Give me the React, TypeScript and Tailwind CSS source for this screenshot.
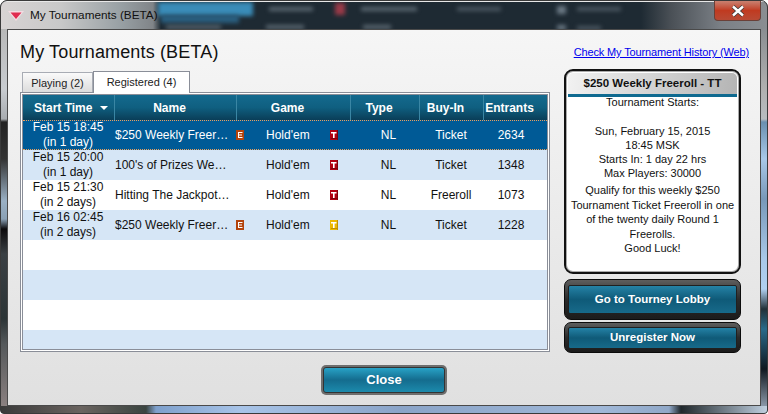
import React from "react";

const cols = ["w-[91px]", "w-[122px]", "w-[114px]", "w-[69px]", "w-[64px]", "w-[64px]"];
const headCols = ["w-[92px]", "w-[122px]", "w-[114px]", "w-[69px]", "w-[64px]", "w-[63px]"];
const headers = ["Start Time", "Name", "Game", "Type", "Buy-In", "Entrants"];
const rows = [
  { d: "Feb 15 18:45", r: "(in 1 day)", n: "$250 Weekly Freer…", e: true, t: "#b00010", s: "#7c0008", b: "Ticket", c: "2634" },
  { d: "Feb 15 20:00", r: "(in 1 day)", n: "100's of Prizes We…", e: false, t: "#b00010", s: "#7c0008", b: "Ticket", c: "1348" },
  { d: "Feb 15 21:30", r: "(in 2 days)", n: "Hitting The Jackpot…", e: false, t: "#b00010", s: "#7c0008", b: "Freeroll", c: "1073" },
  { d: "Feb 16 02:45", r: "(in 2 days)", n: "$250 Weekly Freer…", e: true, t: "#ecb800", s: "#c09000", b: "Ticket", c: "1228" },
];

const blurs = [
  { c: "left-[157px] top-[0px] w-[95px] h-[14px] bg-[#3a8cb8]" },
  { c: "left-[160px] top-[13px] w-[78px] h-[8px] bg-[#2a5f80]" },
  { c: "left-[165px] top-[23px] w-[55px] h-[4px] bg-[#56646e]" },
  { c: "left-[268px] top-[5px] w-[44px] h-[4px] bg-[#5c6872]" },
  { c: "left-[265px] top-[23px] w-[38px] h-[4px] bg-[#5c6872]" },
  { c: "left-[334px] top-[1px] w-[10px] h-[12px] bg-[#9a3a48]" },
  { c: "left-[360px] top-[5px] w-[56px] h-[4px] bg-[#5c6872]" },
  { c: "left-[362px] top-[23px] w-[28px] h-[4px] bg-[#5c6872]" },
  { c: "left-[456px] top-[5px] w-[44px] h-[4px] bg-[#4c5862]" },
  { c: "left-[556px] top-[4px] w-[9px] h-[8px] bg-[#6a7884]" },
  { c: "left-[576px] top-[5px] w-[44px] h-[4px] bg-[#4c5862]" },
  { c: "left-[556px] top-[23px] w-[9px] h-[5px] bg-[#6a7884]" },
  { c: "left-[576px] top-[24px] w-[24px] h-[4px] bg-[#4c5862]" },
];

function TIcon({ color, shade }: { color: string; shade: string }) {
  return (
    <svg width="8" height="10" viewBox="0 0 8 10" className="shrink-0">
      <rect width="8" height="10" fill={color} />
      <path d="M7 9H1V8h6zM8 0H7v10h1z" fill={shade} />
      <path d="M1 2h5.5v1.6H4.6V8H3V3.6H1z" fill="#fff" />
    </svg>
  );
}

function EIcon() {
  return (
    <svg width="8" height="10" viewBox="0 0 8 10" className="shrink-0">
      <rect width="8" height="10" fill="#b3430c" />
      <path d="M2 2h4.5v1H3v1.5h3v1H3V7h3.5v1H2z" fill="#fff" />
    </svg>
  );
}

function DarkButton({ label, outer, inner }: { label: string; outer: string; inner: string }) {
  return (
    <div className={`${outer} rounded-[7px] border border-[#0c0c0c] bg-gradient-to-b from-[#5e5e5e] via-[#2a2a2a] to-[#1c1c1c] px-[3px] flex flex-col justify-center`}>
      <div className={`${inner} rounded-[2px] border border-[#202020] bg-gradient-to-b from-[#2482a6] via-[#0f5a78] to-[#176a8a] flex items-center justify-center text-white text-[11.5px] font-bold`}>
        {label}
      </div>
    </div>
  );
}

export default function App() {
  return (
    <div className="relative w-[768px] h-[414px] overflow-hidden flex flex-col rounded-t-[7px] rounded-b-[4px] border border-[#3a3a3a] bg-[#20282f] font-['Liberation_Sans',sans-serif]">
      {/* Title bar */}
      <div className="relative h-[28px] shrink-0 overflow-hidden border-t border-[#e8e8e8] bg-[linear-gradient(90deg,#d8d4d4_0px,#c8c8c8_60px,#98a0a4_120px,#808488_152px,#1e2a33_160px,#1e2a33_640px,#4a5056_670px,#7b8086_720px,#8a8e92_767px)]">
        {blurs.map((b, i) => (
          <div key={i} className={`absolute blur-[2px] ${b.c}`} />
        ))}
        <div className="relative flex items-center h-full pl-[7px] gap-[6px] text-[11.75px] text-[#111]">
          <svg width="16" height="10" viewBox="0 0 16 10">
            <path d="M0 0h16L8 10z" fill="#f4dce2" />
            <path d="M2.5 1.5h11L8 8z" fill="#e02c50" />
          </svg>
          <span className="pb-[1px]">My Tournaments (BETA)</span>
        </div>
      </div>
      <div className="absolute top-[0px] left-[713px] w-[47px] h-[20px] rounded-b-[4px] border border-[#6a4038] border-t-0 bg-gradient-to-b from-[#c88070] via-[#c03a20] to-[#b84a34] flex items-center justify-center">
        <svg width="14" height="12" viewBox="0 0 14 12">
          <path d="M2 1.5l10 9M12 1.5l-10 9" stroke="#3a3a3a" strokeWidth="4" />
          <path d="M2 1.5l10 9M12 1.5l-10 9" stroke="#fff" strokeWidth="2.4" />
        </svg>
      </div>

      <div className="flex h-[377px] shrink-0">
        <div className="w-[6px] shrink-0 bg-[linear-gradient(180deg,#b8b8b8_0px,#c8ccd0_60px,#a8acb0_90px,#222_93px,#333_130px,#9ab0c4_172px,#8aa0b4_190px,#0c0a0c_200px,#3a4044_225px,#2c3436_290px,#54585a_315px,#8a8080_377px)]" />
        {/* Client */}
        <div className="w-[754px] shrink-0 border border-[#4a4a4a] bg-gradient-to-b from-[#f6f6f6] to-[#e0e0e0] flex flex-col pl-[12px] pr-[19px]">
          <div className="flex items-start justify-between h-[38px] shrink-0">
            <h1 className="text-[18px] leading-[21px] mt-[12px] text-[#111] tracking-[0.15px]">My Tournaments (BETA)</h1>
            <a className="text-[11px] leading-[14px] mt-[15px] mr-[-8px] text-[#0000ee] underline tracking-[-0.14px]">Check My Tournament History (Web)</a>
          </div>
          <div className="flex gap-[14px]">
            {/* Left */}
            <div className="w-[530px] shrink-0 flex flex-col">
              <div className="flex h-[24px] pl-[2px] items-end text-[11px] text-[#222]">
                <div className="w-[71px] h-[20px] pt-[1px] border border-[#a8acb4] border-b-0 bg-gradient-to-b from-[#fafafa] to-[#dcdcdc] flex items-center justify-center">
                  Playing (2)
                </div>
                <div className="w-[97px] h-[22px] border border-[#8a8e98] border-b-0 bg-white flex items-center justify-center relative top-[1px] z-10">
                  Registered (4)
                </div>
              </div>
              <div className="w-[530px] h-[260px] border border-[#8a8e98] bg-white p-[1px]">
                <div className="h-full border border-[#8a8e98] bg-white flex flex-col overflow-hidden">
                  <div className="flex h-[25px] shrink-0 bg-gradient-to-b from-[#146a8e] via-[#0f5f80] to-[#0a3e58] text-white text-[12px] font-bold">
                    {headers.map((h, i) => (
                      <div
                        key={h}
                        className={`${headCols[i]} ${i < 5 ? "border-r border-[#3a86a4]" : ""} ${i === 0 ? "pl-[11px] justify-start gap-[8px]" : "pr-[12px] justify-center"} flex items-center whitespace-nowrap`}
                      >
                        {h}
                        {i === 0 && <span className="w-0 h-0 border-x-[4px] border-x-transparent border-t-[4px] border-t-white" />}
                      </div>
                    ))}
                  </div>
                  {rows.map((r, i) => (
                    <div
                      key={i}
                      className={`flex h-[30px] shrink-0 items-center text-[12px] leading-[15px] ${
                        i === 0
                          ? "bg-[#005a96] text-white border-y border-dotted border-[#e8a060]"
                          : i % 2 === 1
                            ? "bg-[#d6e6f6] text-[#111]"
                            : "bg-white text-[#111]"
                      }`}
                    >
                      <div className={`${cols[0]} pr-[1px] text-center whitespace-nowrap`}>
                        <div>{r.d}</div>
                        <div>{r.r}</div>
                      </div>
                      <div className="w-[130px] pl-[1px] flex items-center justify-between whitespace-nowrap">
                        <span>{r.n}</span>
                        {r.e && <EIcon />}
                      </div>
                      <div className="w-[106px] pl-[22px] pr-[12px] flex items-center justify-between">
                        <span>Hold'em</span>
                        <TIcon color={r.t} shade={r.s} />
                      </div>
                      <div className={`${cols[3]} pl-[8px] text-center`}>NL</div>
                      <div className={`${cols[4]} text-center`}>{r.b}</div>
                      <div className={`${cols[5]} pr-[8px] text-center`}>{r.c}</div>
                    </div>
                  ))}
                  <div className="h-[30px] shrink-0 bg-white" />
                  <div className="h-[30px] shrink-0 bg-[#d6e6f6]" />
                  <div className="h-[30px] shrink-0 bg-white" />
                  <div className="flex-1 bg-[#d6e6f6]" />
                </div>
              </div>
            </div>
            {/* Right */}
            <div className="w-[177px] shrink-0 flex flex-col pt-[1px]">
              <div className="h-[205px] rounded-[9px] border-[2px] border-[#111] bg-white p-[2px] shadow-[inset_0_0_0_1px_#aaa]">
                <div className="h-full rounded-[5px] overflow-hidden flex flex-col bg-white">
                  <div className="h-[21px] shrink-0 bg-[linear-gradient(100deg,#f2f2f2,#b4b4b4)] flex items-center justify-center text-[11.5px] font-bold text-[#111]">
                    $250 Weekly Freeroll - TT
                  </div>
                  <div className="h-[3px] shrink-0 bg-[#0f6a90]" />
                  <div className="flex-1 text-center text-[11px] leading-[14px] text-[#111] -mt-[2px] px-[1px]">
                    <div>Tournament Starts:</div>
                    <div className="mt-[15px]">Sun, February 15, 2015</div>
                    <div>18:45 MSK</div>
                    <div>Starts In: 1 day 22 hrs</div>
                    <div>Max Players: 30000</div>
                    <div className="mt-[3px] leading-[14.5px]">Qualify for this weekly $250 Tournament Ticket Freeroll in one of the twenty daily Round 1 Freerolls.</div>
                    <div className="leading-[14.5px]">Good Luck!</div>
                  </div>
                </div>
              </div>
              <div className="mt-[5px]">
                <DarkButton label="Go to Tourney Lobby" outer="h-[41px]" inner="h-[29px]" />
              </div>
              <div className="mt-[2px]">
                <DarkButton label="Unregister Now" outer="h-[31px]" inner="h-[22px]" />
              </div>
            </div>
          </div>
          <div className="flex justify-center pl-[7px] mt-[12px]">
            <div className="w-[126px] h-[30px] rounded-[5px] bg-[#6e6e6e] p-[2px]">
              <div className="h-full pb-[1px] rounded-[3px] border border-[#333] bg-gradient-to-b from-[#28a2c6] via-[#146c8e] to-[#1c8aac] flex items-center justify-center text-white text-[13px] font-bold">
                Close
              </div>
            </div>
          </div>
        </div>
        <div className="w-[6px] shrink-0 bg-[linear-gradient(180deg,#8a8e92_0px,#b0b0b0_60px,#b8bcc0_90px,#6a90b0_93px,#a8c8e8_130px,#7898b8_170px,#a8c8e8_230px,#b0d0f0_260px,#223038_280px,#2a6a8a_300px,#101820_340px,#8a98a8_377px)]" />
      </div>
      <div className="flex-1 bg-[linear-gradient(90deg,#3a3a3a_0px,#6a6460_80px,#3a4440_145px,#7ea0cc_155px,#a8c4e8_240px,#8aa4c8_400px,#a0b8d8_600px,#90a8c8_668px,#20282c_680px,#c0d0e0_766px)]" />
    </div>
  );
}
